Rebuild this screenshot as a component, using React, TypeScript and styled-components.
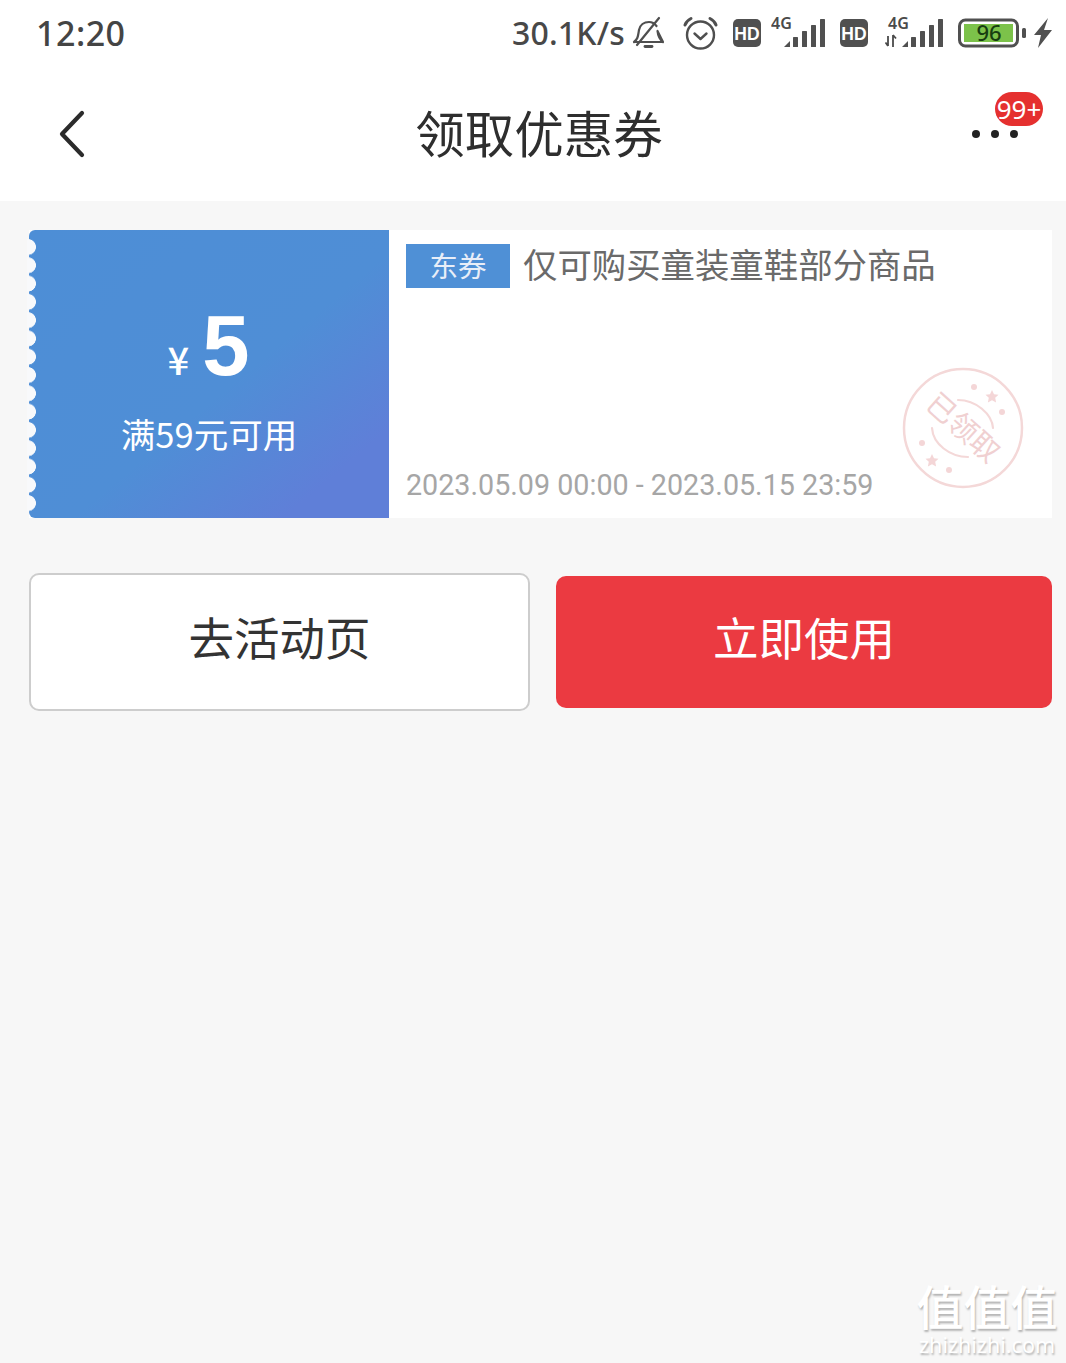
import React from "react";
import styled, { createGlobalStyle } from "styled-components";

const CJK = `"Noto Sans CJK SC", "Noto Sans", sans-serif`;

const Global = createGlobalStyle`
  html, body { margin: 0; padding: 0; background: #f7f7f7; }
  * { box-sizing: border-box; }
  body { font-family: ${CJK}; }
`;

const Page = styled.div`
  width: 1066px;
  height: 1363px;
  background: #f7f7f7;
  display: flex;
  flex-direction: column;
  position: relative;
  overflow: hidden;
`;

const Header = styled.header`
  background: #fff;
  height: 201px;
  display: flex;
  flex-direction: column;
`;

const StatusBar = styled.div`
  height: 66px;
  display: flex;
  align-items: center;
  padding: 0 13px 0 36px;
  color: #4a4a4a;
`;

const Clock = styled.span`
  font: 500 34px/1 "Noto Sans", sans-serif;
  letter-spacing: 0.5px;
  color: #444;
  margin-right: auto;
`;

const Speed = styled.span`
  font: 500 32px/1 "Noto Sans", sans-serif;
  color: #484848;
  letter-spacing: 0.2px;
`;

const Slot = styled.span<{ $left: number }>`
  display: flex;
  margin-left: ${(p) => p.$left}px;
`;

const Nav = styled.div`
  flex: 1;
  display: grid;
  grid-template-columns: 60px 1fr 60px;
  align-items: center;
  padding: 0 46px 0 58px;
  position: relative;
`;

const Title = styled.h1`
  margin: 0;
  padding-bottom: 4px;
  text-align: center;
  font: 400 49.5px/1 ${CJK};
  color: #2e2e2e;
`;

const More = styled.div`
  position: relative;
  display: flex;
  gap: 11px;
  justify-content: flex-start;
  margin-left: 12px;
`;

const Dot = styled.i`
  width: 8px;
  height: 8px;
  border-radius: 50%;
  background: #222;
`;

const Badge = styled.span`
  position: absolute;
  left: 23px;
  top: -38px;
  width: 48px;
  height: 34px;
  border-radius: 17px;
  background: #e5302f;
  color: #fff;
  font: 400 26px/34px "Noto Sans", sans-serif;
  text-align: center;
  white-space: nowrap;
`;

const Main = styled.main`
  padding: 29px 14px 0 29px;
  display: flex;
  flex-direction: column;
  gap: 55px;
`;

const Coupon = styled.section`
  display: flex;
  height: 288px;
  background: #fff;
`;

const Value = styled.div`
  position: relative;
  width: 360px;
  flex: none;
  border-radius: 6px 0 0 6px;
  background: linear-gradient(140deg, #4d8ed6 0%, #4f8ed6 55%, #5f7fd8 85%);
  color: #fff;
  display: flex;
  flex-direction: column;
  align-items: center;
  padding: 72px 0 0 0;
  &::before {
    content: "";
    position: absolute;
    left: -2px;
    top: 8px;
    bottom: 6px;
    width: 10px;
    background: radial-gradient(circle at 1px 9px, #f8f9fb 0, #f8f9fb 7.6px, transparent 8.2px) 0 0 / 10px 18.3px repeat-y;
  }
`;

const Amount = styled.div`
  display: flex;
  align-items: baseline;
  gap: 13px;
  height: 88px;
  margin-left: -1px;
`;

const Yen = styled.span`
  font: 500 38px/1 "Noto Sans CJK SC", sans-serif;
`;

const Five = styled.span`
  font: 700 85px/88px "Liberation Sans", sans-serif;
`;

const Threshold = styled.div`
  margin-top: 19px;
  font: 400 34.5px/48px ${CJK};
  white-space: nowrap;
`;

const Detail = styled.div`
  position: relative;
  flex: 1;
  padding: 14px 17px 15px;
  display: flex;
  flex-direction: column;
  justify-content: space-between;
`;

const TitleRow = styled.div`
  display: flex;
  align-items: flex-start;
  gap: 13px;
`;

const Tag = styled.span`
  width: 104px;
  height: 44px;
  background: #4f90d6;
  color: #e8eef8;
  font: 400 28.5px/42px ${CJK};
  text-align: center;
`;

const Desc = styled.span`
  font: 400 34.4px/38px ${CJK};
  color: #6a6a6a;
  white-space: nowrap;
`;

const Dates = styled.div`
  font: 400 28.7px/36px Roboto, sans-serif;
  color: #a6a6a6;
  white-space: nowrap;
`;

const Stamp = styled.svg`
  position: absolute;
  left: 512px;
  top: 136px;
  width: 124px;
  height: 124px;
`;

const Actions = styled.div`
  display: flex;
  align-items: center;
  gap: 26px;
`;

const Button = styled.button<{ $primary?: boolean }>`
  font: 400 45.5px/1 ${CJK};
  text-align: center;
  padding: 0 0 10px;
  border-radius: 10px;
  ${(p) =>
    p.$primary
      ? `width: 496px; height: 132px; background: #eb3a41; color: #fff; border: none;`
      : `width: 501px; height: 138px; background: #fff; color: #333; border: 2px solid #cdcdcd;`}
`;

const Mark = styled.div`
  position: absolute;
  right: 8px;
  bottom: 6px;
  width: 142px;
  display: flex;
  flex-direction: column;
  align-items: center;
  color: #fff;
  text-shadow: 1px 2px 2px rgba(0, 0, 0, 0.28);
`;

const MarkGlyphs = styled.div`
  font: 500 47px/50px ${CJK};
  white-space: nowrap;
  padding-bottom: 3px;
`;

const MarkUrl = styled.div`
  font: 400 21.5px/24px "Noto Sans", sans-serif;
  white-space: nowrap;
`;

const Hd = () => (
  <svg width="28" height="28" viewBox="0 0 28 28">
    <rect x="0" y="0" width="28" height="28" rx="5" fill="#505050" />
    <text x="14" y="20.5" textAnchor="middle" fontFamily="Liberation Sans" fontWeight="700" fontSize="17.5" fill="#fff">HD</text>
  </svg>
);

const Signal = ({ arrows, x }: { arrows?: boolean; x: number }) => (
  <svg width={x + 41} height="42" viewBox={`0 0 ${x + 41} 42`}>
    <text x={arrows ? 3 : 0} y="17" fontFamily="Noto Sans" fontWeight="600" fontSize="16" fill="#4a4a4a">4G</text>
    {arrows && <path d="M3 24v10M0.500 30.500l2.500 3.500M8 35V23M8 23l3 3.500" stroke="#4a4a4a" strokeWidth="1.800" fill="none" />}
    <g fill="#505050">
      <path d={`M${x} 35 l6 -6 v6z`} />
      <rect x={x + 9} y="25" width="5" height="10" rx="0.6" />
      <rect x={x + 18} y="19" width="5" height="16" rx="0.6" />
      <rect x={x + 27} y="13" width="5" height="22" rx="0.6" />
      <rect x={x + 36} y="7" width="5" height="28" rx="0.6" />
    </g>
  </svg>
);

export default function App() {
  return (
    <Page>
      <Global />
      <Header>
        <StatusBar>
          <Clock>12:20</Clock>
          <Speed>30.1K/s</Speed>
          <Slot $left={7}>
            <svg width="33" height="34" viewBox="0 0 33 34" fill="none" stroke="#4f4f4f" strokeWidth="2.2" strokeLinecap="round" strokeLinejoin="round">
              <path d="M2 26c4-3 4-6 5-12 1-5 5-8 10-8 3 0 6 2 7.500 4M25.500 15c.5 5 1.500 8 5.500 11z M2 26h29" />
              <path d="M27 2 5 29" />
              <path d="M13 30.500h7" strokeWidth="2.800" />
            </svg>
          </Slot>
          <Slot $left={18}>
            <svg width="35" height="35" viewBox="0 0 35 35" fill="none" stroke="#4f4f4f" strokeWidth="2.400" strokeLinecap="round" strokeLinejoin="round">
              <circle cx="17.500" cy="19" r="13.500" />
              <path d="M11.500 17.500l6 5.500 6-5.500" />
              <path d="M2 9c1-3 3-5 6-6.500M33 9c-1-3-3-5-6-6.500" strokeWidth="3" />
            </svg>
          </Slot>
          <Slot $left={15}><Hd /></Slot>
          <Slot $left={10}><Signal x={13} /></Slot>
          <Slot $left={15}><Hd /></Slot>
          <Slot $left={17}><Signal arrows x={17} /></Slot>
          <Slot $left={15}>
            <svg width="70" height="32" viewBox="0 0 70 32">
              <rect x="1.500" y="3" width="58" height="26" rx="6" fill="#fff" stroke="#505050" strokeWidth="3" />
              <rect x="6" y="7" width="49" height="18" fill="#7cc24a" />
              <text x="31" y="23.500" textAnchor="middle" fontFamily="Noto Sans" fontWeight="500" fontSize="22" fill="#173d10">96</text>
              <rect x="64" y="11" width="4" height="10" rx="1.500" fill="#505050" />
            </svg>
          </Slot>
          <Slot $left={5}>
            <svg width="20" height="30" viewBox="0 0 20 30">
              <path d="M15 0 1 17h7L5 30l14-18h-8z" fill="#505050" />
            </svg>
          </Slot>
        </StatusBar>
        <Nav>
          <svg width="28" height="48" viewBox="0 0 28 48" fill="none" stroke="#2b2b2b" strokeWidth="4.200" strokeLinecap="round" strokeLinejoin="round">
            <path d="M24 3 4 24l20 21" />
          </svg>
          <Title>领取优惠券</Title>
          <More>
            <Dot />
            <Dot />
            <Dot />
            <Badge>99+</Badge>
          </More>
        </Nav>
      </Header>
      <Main>
        <Coupon>
          <Value>
            <Amount>
              <Yen>¥</Yen>
              <Five>5</Five>
            </Amount>
            <Threshold>满59元可用</Threshold>
          </Value>
          <Detail>
            <TitleRow>
              <Tag>东券</Tag>
              <Desc>仅可购买童装童鞋部分商品</Desc>
            </TitleRow>
            <Dates>2023.05.09 00:00 - 2023.05.15 23:59</Dates>
            <Stamp viewBox="0 0 124 124" fill="none" stroke="#f4d8d8">
              <circle cx="62" cy="62" r="59" strokeWidth="2.500" />
              <path d="M57 34c18 0 34 14 35 28M31 62c1 16 18 29 36 29" strokeWidth="2.200" strokeLinecap="round" />
              <g fill="#f4d6d7" stroke="none">
                <circle cx="73" cy="21" r="3" />
                <path d="M91 24l2 4.200 4.500.5-3.300 3.100.9 4.600-4.100-2.200-4.100 2.200.9-4.600-3.300-3.100 4.500-.5z" />
                <circle cx="101" cy="46" r="3" />
                <circle cx="21" cy="77" r="3" />
                <path d="M31 88l2 4.200 4.500.5-3.300 3.100.9 4.600-4.100-2.200-4.100 2.200.9-4.600-3.300-3.100 4.500-.5z" />
                <circle cx="48" cy="104" r="3" />
                <text x="62" y="72" transform="rotate(42 62 62)" textAnchor="middle" fontFamily="Noto Sans CJK SC" fontSize="29" fill="#f0d0d1">已领取</text>
              </g>
            </Stamp>
          </Detail>
        </Coupon>
        <Actions>
          <Button>去活动页</Button>
          <Button $primary>立即使用</Button>
        </Actions>
      </Main>
      <Mark>
        <MarkGlyphs>值值值</MarkGlyphs>
        <MarkUrl>zhizhizhi.com</MarkUrl>
      </Mark>
    </Page>
  );
}
